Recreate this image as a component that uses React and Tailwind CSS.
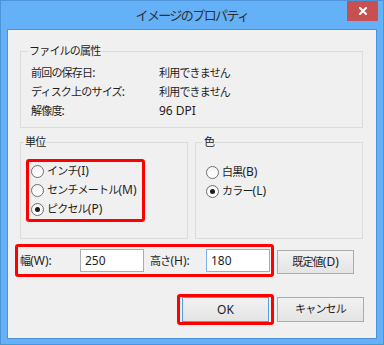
import React from 'react';

// Latin parts are set a little larger, as Meiryo UI draws them
function L({ children }) {
  return <span className="text-[12px] tracking-normal">{children}</span>;
}

function Radio({ checked = false, label, hotkey }) {
  return (
    <div className="flex items-center h-[18px]">
      <span className="w-[13px] h-[13px] rounded-full border border-[#6f6f6f] bg-gradient-to-b from-[#f4f4f4] to-[#ffffff] flex items-center justify-center">
        {checked && <span className="w-[5px] h-[5px] rounded-full bg-[#1c1c1c]" />}
      </span>
      <span className="ml-[3px]">
        {label}
        <L>({hotkey})</L>
      </span>
    </div>
  );
}

function Button({ children, primary = false, className = '' }) {
  return (
    <div
      className={`w-[87px] h-[25px] flex items-center justify-center border bg-gradient-to-b from-[#f2f2f2] to-[#e4e4e4] ${
        primary ? 'border-[#5a9ddf]' : 'border-[#acacac]'
      } ${className}`}
    >
      {children}
    </div>
  );
}

export default function App() {
  return (
    <div className="w-[384px] h-[345px] bg-[#64b1f8] border border-[#4d93d8] flex flex-col font-['Noto_Sans','Noto_Sans_CJK_JP',sans-serif] text-[11px] text-[#1e1e1e] tracking-[-0.8px]">
      {/* title bar */}
      <div className="relative h-[28px] flex items-center justify-center">
        <span className="text-[13px] text-[#2e2e2e] tracking-[-1.6px] mt-[1px]">イメージのプロパティ</span>
        <div className="absolute top-0 right-[5px] w-[31px] h-[20px] bg-[#c75050] flex items-center justify-center">
          <svg width="8" height="8" viewBox="0 0 8 8">
            <path d="M1 1 L7 7 M7 1 L1 7" stroke="#ffffff" strokeWidth="2" strokeLinecap="square" />
          </svg>
        </div>
      </div>

      {/* body */}
      <div className="mx-[6px] h-[310px] bg-[#f0f0f0] border border-[#4d93d8] flex flex-col">
        <fieldset className="ml-[12px] mt-[13px] w-[343px] h-[85px] border border-[#dcdcdc]">
          <legend className="ml-[7px] px-[1px] leading-[16px]">ファイルの属性</legend>
          <div className="mt-[5px] ml-[10px] flex flex-col gap-[1px] leading-[18px]">
            <div className="flex">
              <span className="w-[128px]">前回の保存日<L>:</L></span>
              <span>利用できません</span>
            </div>
            <div className="flex">
              <span className="w-[128px]">ディスク上のサイズ<L>:</L></span>
              <span>利用できません</span>
            </div>
            <div className="flex">
              <span className="w-[128px]">解像度<L>:</L></span>
              <L>96 DPI</L>
            </div>
          </div>
        </fieldset>

        <div className="flex gap-[7px] ml-[12px] mt-[6px]">
          <fieldset className="w-[168px] h-[105px] border border-[#dcdcdc]">
            <legend className="ml-[3px] px-[1px] leading-[16px]">単位</legend>
            <div className="mt-[9px] ml-[5px] w-[119px] h-[63px] border-[3px] border-[#ff0000] rounded-[3px] pl-[2px] flex flex-col gap-[1px]">
              <Radio label="インチ" hotkey="I" />
              <Radio label="センチメートル" hotkey="M" />
              <Radio checked label="ピクセル" hotkey="P" />
            </div>
          </fieldset>
          <fieldset className="w-[168px] h-[105px] border border-[#dcdcdc]">
            <legend className="ml-[7px] px-[1px] leading-[16px]">色</legend>
            <div className="mt-[13px] ml-[10px] flex flex-col gap-[1px]">
              <Radio label="白黒" hotkey="B" />
              <Radio checked label="カラー" hotkey="L" />
            </div>
          </fieldset>
        </div>

        <div className="flex items-start ml-[7px] mt-[5px]">
          <div className="w-[259px] h-[33px] border-[3px] border-[#ff0000] rounded-[3px] flex items-center">
            <span className="ml-[2px] w-[60px]">幅<L>(W):</L></span>
            <div className="w-[64px] h-[23px] bg-white border border-[#abadb3] flex items-center pl-[4px]"><L>250</L></div>
            <span className="ml-[6px] w-[56px]">高さ<L>(H):</L></span>
            <div className="w-[64px] h-[23px] bg-white border border-[#7eb4ea] flex items-center pl-[4px]"><L>180</L></div>
          </div>
          <div className="ml-[3px] mt-[6px] w-[77px] h-[24px] flex items-center justify-center border border-[#acacac] bg-gradient-to-b from-[#f2f2f2] to-[#e4e4e4]">
            既定値<L>(D)</L>
          </div>
        </div>

        <div className="flex items-start mt-[17px] ml-[169px]">
          <div className="w-[97px] h-[31px] border-[3px] border-[#ff0000] rounded-[3px] flex items-center justify-center">
            <Button primary><L>OK</L></Button>
          </div>
          <Button className="ml-[3px] mt-[3px]">キャンセル</Button>
        </div>
      </div>
    </div>
  );
}
